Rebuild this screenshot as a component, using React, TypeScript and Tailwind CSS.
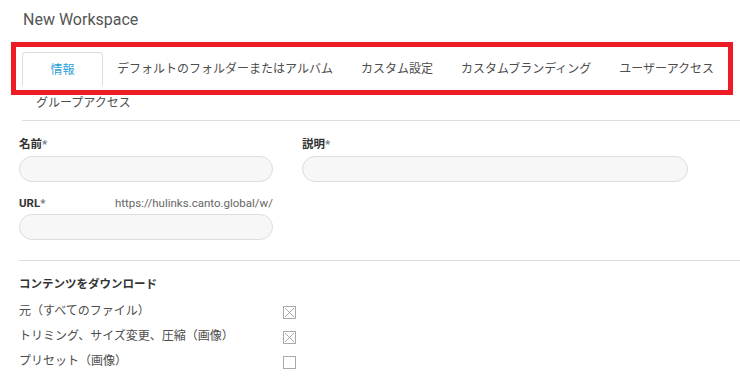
import React from 'react'

const tabs = [
  'デフォルトのフォルダーまたはアルバム',
  'カスタム設定',
  'カスタムブランディング',
  'ユーザーアクセス',
  'グループアクセス',
]

const downloads = [
  { label: '元（すべてのファイル）', checked: true },
  { label: 'トリミング、サイズ変更、圧縮（画像）', checked: true },
  { label: 'プリセット（画像）', checked: false },
]

function CheckBox({ checked }: { checked: boolean }) {
  return (
    <svg width="13" height="13" viewBox="0 0 13 13" className="mt-[3px]">
      <rect x="0.5" y="0.5" width="12" height="12" fill="#fff" stroke="#a9a9a9" />
      {checked && (
        <path d="M2 2 L11 11 M11 2 L2 11" stroke="#a9a9a9" strokeWidth="1" />
      )}
    </svg>
  )
}

export default function App() {
  return (
    <div className="relative w-[740px] h-[387px] overflow-hidden bg-white font-['Roboto','Noto_Sans_CJK_JP',sans-serif]">
      <h1 className="pl-[23px] pt-[10px] text-[16px] leading-[20px] text-[#555]">New Workspace</h1>

      {/* Tabs */}
      <div className="mt-[22px] ml-[22px] flex flex-wrap border-b border-[#dddddd]">
        <div className="h-[34px] min-w-[81px] px-[14px] flex items-center justify-center rounded-t-[4px] border border-b-0 border-[#dddddd] text-[12px] text-[#2a9fd8]">
          情報
        </div>
        {tabs.map((t) => (
          <div key={t} className="h-[34px] px-[14px] flex items-center text-[12px] text-[#4d4d4d] whitespace-nowrap">
            {t}
          </div>
        ))}
      </div>

      {/* Form */}
      <div className="pl-[19px]">
        <div className="mt-[15px] grid grid-cols-[254px_386px] gap-x-[29px]">
          <div>
            <div className="text-[11.5px] leading-[16px] font-bold text-[#333]">名前<span className="text-[#777]">*</span></div>
            <div className="mt-[4px] h-[26px] rounded-full border border-[#dddddd] bg-[#f7f7f7]" />
            <div className="mt-[13px] flex items-center justify-between leading-[16px]">
              <span className="text-[11.5px] font-bold text-[#333]">URL<span className="text-[#777]">*</span></span>
              <span className="text-[11.5px] text-[#666]">https://hulinks.canto.global/w/</span>
            </div>
            <div className="mt-[3px] h-[26px] rounded-full border border-[#dddddd] bg-[#f7f7f7]" />
          </div>
          <div>
            <div className="text-[11.5px] leading-[16px] font-bold text-[#333]">説明<span className="text-[#777]">*</span></div>
            <div className="mt-[4px] h-[26px] rounded-full border border-[#dddddd] bg-[#f7f7f7]" />
          </div>
        </div>

        <div className="mt-[20px] border-t border-[#dddddd]" />

        <div className="mt-[15px] text-[11.5px] leading-[16px] font-bold text-[#333]">コンテンツをダウンロード</div>
        <div className="mt-[6px]">
          {downloads.map((d) => (
            <div key={d.label} className="h-[25px] grid grid-cols-[264px_20px] items-center">
              <span className="text-[12px] text-[#4d4d4d]">{d.label}</span>
              <CheckBox checked={d.checked} />
            </div>
          ))}
        </div>
      </div>

      {/* annotation */}
      <div className="absolute left-[11px] top-[42px] w-[722px] h-[53px] border-[5px] border-[#ed1c24]" />
    </div>
  )
}
